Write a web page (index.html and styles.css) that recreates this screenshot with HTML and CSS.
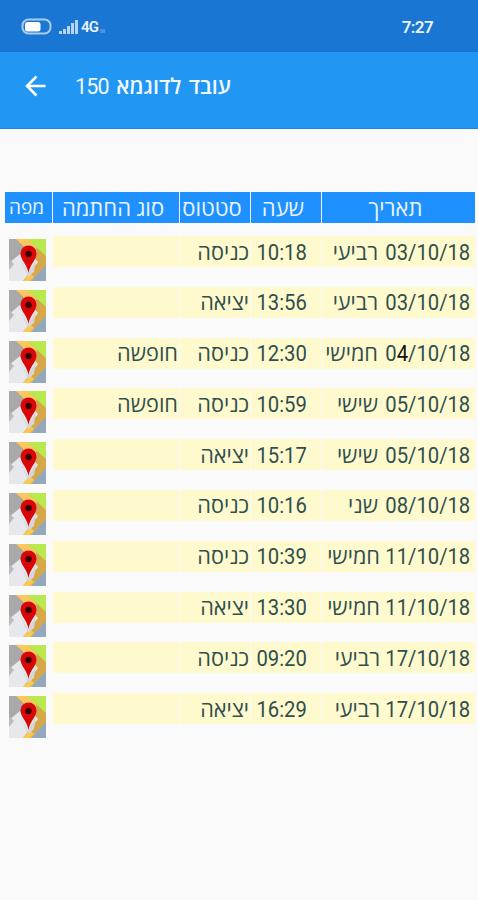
FILE: index.html
```html
<!DOCTYPE html>
<html lang="he" dir="rtl">

<head>
    <meta charset="UTF-8">
    <title>עובד לדוגמא 150</title>
    <link rel="stylesheet" href="styles.css">
</head>

<body>

    <!-- shared map icon -->
    <svg class="defs" width="0" height="0">
        <symbol id="map" viewBox="0 0 37 42" preserveAspectRatio="none">
            <rect width="37" height="42" fill="#e6e8ec" />
            <path d="M0 0h9l11 13L0 30z" fill="#a9a9ab" />
            <path d="M0 24l11-9 4 4L0 34z" fill="#e6e8ec" />
            <path d="M0 20l5 5-5 6z" fill="#b9babc" />
            <path d="M14 0h23v19z" fill="#b9e94f" />
            <path d="M7 0h11l19 17v10L22 42h-8l15-19z" fill="#d6a849" />
            <path d="M7 0h11l10 9-6 5z" fill="#fbc860" />
            <path d="M14 42l7-8 4 4-4 4z" fill="#fbc84d" />
            <path d="M37 26v16H22z" fill="#93a9bb" />
            <path d="M11 20l8 15 8-15-2 13-6 5z" fill="#d5d6dc" />
            <path d="M19.500 34C18 25 11.500 21 11.500 14.500a8 8 0 0 1 16 0C27.500 21 21 25 19.500 34z" fill="#d80808" />
            <circle cx="19.500" cy="15" r="3.200" fill="#3c0000" />
        </symbol>
    </svg>

    <div class="status-bar">
        <span class="clock">7:27</span>
        <div class="signals">
            <svg class="battery" width="32" height="18" viewBox="0 0 32 18">
                <rect x="1.500" y="1.500" width="28" height="14" rx="6" fill="none" stroke="#a9cdf3" stroke-width="2" />
                <rect x="4" y="4" width="15.500" height="9.500" rx="2.500" fill="#fff" />
            </svg>
            <svg class="bars" width="20" height="16" viewBox="0 0 20 16">
                <path d="M0 15v-3h3v3zM4 15v-5h3v5zM8 15V7h3v8zM12 15V4h3v11zM16 15V1h3v14z" fill="#b5d3f3" />
            </svg>
            <span class="network">4G</span>
            <span class="network-dot"></span>
        </div>
    </div>

    <div class="app-bar">
        <svg class="back" width="22" height="24" viewBox="0 0 22 24">
            <path d="M20.500 12H2M11.500 2.500L2 12l9.500 9.500" fill="none" stroke="#fff" stroke-width="2.600" />
        </svg>
        <h1>עובד לדוגמא <span>150</span></h1>
    </div>

    <div class="table">
        <div class="row head">
            <div class="cell"><span>תאריך</span></div>
            <div class="cell"><span>שעה</span></div>
            <div class="cell"><span>סטטוס</span></div>
            <div class="cell"><span>סוג החתמה</span></div>
            <div class="cell map-title"><span>מפה</span></div>
        </div>
        <div class="row">
            <div class="cell date"><span class="num">03/10/18</span><span class="day">רביעי</span></div>
            <div class="cell time"><span class="num">10:18</span></div>
            <div class="cell state"><span>כניסה</span></div>
            <div class="cell type"></div>
            <svg class="map"><use href="#map" /></svg>
        </div>
        <div class="row">
            <div class="cell date"><span class="num">03/10/18</span><span class="day">רביעי</span></div>
            <div class="cell time"><span class="num">13:56</span></div>
            <div class="cell state"><span>יציאה</span></div>
            <div class="cell type"></div>
            <svg class="map"><use href="#map" /></svg>
        </div>
        <div class="row">
            <div class="cell date"><span class="num">0<b>4</b>/10/18</span><span class="day">חמישי</span></div>
            <div class="cell time"><span class="num">12:30</span></div>
            <div class="cell state"><span>כניסה</span></div>
            <div class="cell type"><span>חופשה</span></div>
            <svg class="map"><use href="#map" /></svg>
        </div>
        <div class="row">
            <div class="cell date"><span class="num">05/10/18</span><span class="day">שישי</span></div>
            <div class="cell time"><span class="num">10:59</span></div>
            <div class="cell state"><span>כניסה</span></div>
            <div class="cell type"><span>חופשה</span></div>
            <svg class="map"><use href="#map" /></svg>
        </div>
        <div class="row">
            <div class="cell date"><span class="num">05/10/18</span><span class="day">שישי</span></div>
            <div class="cell time"><span class="num">15:17</span></div>
            <div class="cell state"><span>יציאה</span></div>
            <div class="cell type"></div>
            <svg class="map"><use href="#map" /></svg>
        </div>
        <div class="row">
            <div class="cell date"><span class="num">08/10/18</span><span class="day">שני</span></div>
            <div class="cell time"><span class="num">10:16</span></div>
            <div class="cell state"><span>כניסה</span></div>
            <div class="cell type"></div>
            <svg class="map"><use href="#map" /></svg>
        </div>
        <div class="row">
            <div class="cell date near"><span class="num">11/10/18</span><span class="day">חמישי</span></div>
            <div class="cell time"><span class="num">10:39</span></div>
            <div class="cell state"><span>כניסה</span></div>
            <div class="cell type"></div>
            <svg class="map"><use href="#map" /></svg>
        </div>
        <div class="row">
            <div class="cell date near"><span class="num">11/10/18</span><span class="day">חמישי</span></div>
            <div class="cell time"><span class="num">13:30</span></div>
            <div class="cell state"><span>יציאה</span></div>
            <div class="cell type"></div>
            <svg class="map"><use href="#map" /></svg>
        </div>
        <div class="row">
            <div class="cell date near"><span class="num">17/10/18</span><span class="day">רביעי</span></div>
            <div class="cell time"><span class="num">09:20</span></div>
            <div class="cell state"><span>כניסה</span></div>
            <div class="cell type"></div>
            <svg class="map"><use href="#map" /></svg>
        </div>
        <div class="row">
            <div class="cell date near"><span class="num">17/10/18</span><span class="day">רביעי</span></div>
            <div class="cell time"><span class="num">16:29</span></div>
            <div class="cell state"><span>יציאה</span></div>
            <div class="cell type"></div>
            <svg class="map"><use href="#map" /></svg>
        </div>
    </div>

</body>

</html>
```
FILE: styles.css
```css
* {
    box-sizing: border-box;
}

body {
    margin: 0;
    min-height: 100vh;
    background-color: #fafafa;
    font-family: Roboto, "Open Sans", sans-serif;
    color: #2f4f4f;
    overflow: hidden;
}

.defs {
    display: block;
}

.status-bar {
    height: 52px;
    background-color: #1976d2;
    color: #e8f3ff;
    display: flex;
    justify-content: space-between;
    align-items: center;
    padding: 2px 45px 0 21px;
    font-weight: 600;
}

.clock {
    font-size: 17px;
    letter-spacing: -0.6px;
}

.signals {
    direction: ltr;
    display: flex;
    align-items: center;
}

.bars {
    margin-left: 6px;
}

.network {
    font-size: 15px;
    letter-spacing: -0.8px;
    margin-left: 2px;
}

.network-dot {
    width: 5px;
    height: 4px;
    margin: 7px 0 0 2px;
    background-color: #4b93df;
}

.app-bar {
    direction: ltr;
    height: 77px;
    background-color: #2196f3;
    border-bottom: 1px solid #1b86df;
    display: flex;
    align-items: center;
    padding: 0 0 9px 25px;
    color: #f1f8ff;
}

h1 {
    margin: 0 0 0 28px;
    font-size: 21.5px;
    font-weight: 600;
    word-spacing: 2px;
    direction: rtl;
}

h1 span {
    font-size: 21.5px;
    font-weight: 400;
    letter-spacing: -0.8px;
}

.table {
    padding: 63px 3px 0 5px;
}

.row {
    display: grid;
    grid-template-columns: 153px 70px 70px 126px 47px;
    column-gap: 1px;
    height: 50.8px;
    align-items: start;
}

.cell {
    height: 31px;
    background-color: #fffacd;
    display: flex;
    align-items: center;
    font-size: 21.7px;
    white-space: nowrap;
}

.state span,
.type span,
.day {
    padding-bottom: 1px;
}

.head {
    height: 44px;
}

.head .cell {
    background-color: #1e90ff;
    color: #e9f4ff;
    justify-content: center;
    font-size: 22px;
    padding: 0 6px 1px 0;
}

.head .map-title {
    font-size: 19px;
    font-weight: 500;
    padding-right: 4px;
}

.date {
    padding-right: 6px;
}

.num {
    direction: ltr;
    font-size: 22px;
    padding-top: 1px;
    transform: scaleX(0.92);
    transform-origin: right;
}

.num b {
    font-weight: 400;
    color: #111;
}

.date .num {
    flex: none;
    width: 91px;
    text-align: right;
}

.near .day {
    margin-right: -2px;
}

.time {
    padding-right: 14px;
}

.state,
.type {
    padding-right: 1px;
}

.map {
    width: 37px;
    height: 42px;
    margin: 3px 6px 0 0;
}
```
